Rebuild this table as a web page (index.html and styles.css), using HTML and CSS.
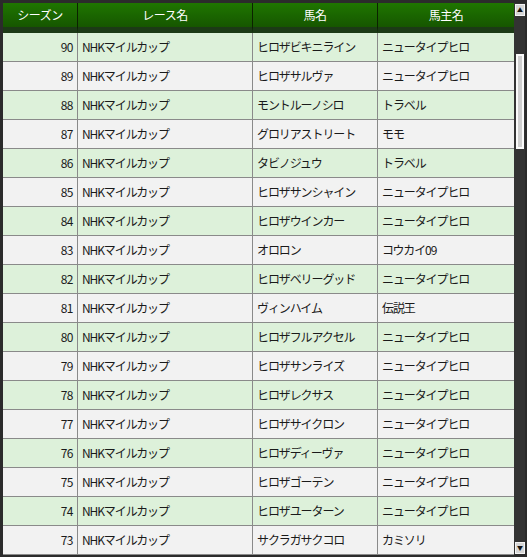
FILE: index.html
```html
<!DOCTYPE html>
<html lang="ja">
<head>
  <meta charset="UTF-8" />
  <title>NHKマイルカップ 歴代優勝馬</title>
  <link rel="stylesheet" href="styles.css">
</head>
<body>
  <div class="frame">
    <table class="winners">
      <colgroup>
        <col class="c-season" />
        <col class="c-race" />
        <col class="c-horse" />
        <col class="c-owner" />
      </colgroup>
      <thead>
        <tr>
          <th>シーズン</th>
          <th>レース名</th>
          <th>馬名</th>
          <th>馬主名</th>
        </tr>
      </thead>
      <tbody>
        <tr><td class="num">90</td><td>NHKマイルカップ</td><td>ヒロザビキニライン</td><td>ニュータイプヒロ</td></tr>
        <tr><td class="num">89</td><td>NHKマイルカップ</td><td>ヒロザサルヴァ</td><td>ニュータイプヒロ</td></tr>
        <tr><td class="num">88</td><td>NHKマイルカップ</td><td>モントルーノシロ</td><td>トラベル</td></tr>
        <tr><td class="num">87</td><td>NHKマイルカップ</td><td>グロリアストリート</td><td>モモ</td></tr>
        <tr><td class="num">86</td><td>NHKマイルカップ</td><td>タビノジュウ</td><td>トラベル</td></tr>
        <tr><td class="num">85</td><td>NHKマイルカップ</td><td>ヒロザサンシャイン</td><td>ニュータイプヒロ</td></tr>
        <tr><td class="num">84</td><td>NHKマイルカップ</td><td>ヒロザウインカー</td><td>ニュータイプヒロ</td></tr>
        <tr><td class="num">83</td><td>NHKマイルカップ</td><td>オロロン</td><td>コウカイ09</td></tr>
        <tr><td class="num">82</td><td>NHKマイルカップ</td><td>ヒロザベリーグッド</td><td>ニュータイプヒロ</td></tr>
        <tr><td class="num">81</td><td>NHKマイルカップ</td><td>ヴィンハイム</td><td>伝説王</td></tr>
        <tr><td class="num">80</td><td>NHKマイルカップ</td><td>ヒロザフルアクセル</td><td>ニュータイプヒロ</td></tr>
        <tr><td class="num">79</td><td>NHKマイルカップ</td><td>ヒロザサンライズ</td><td>ニュータイプヒロ</td></tr>
        <tr><td class="num">78</td><td>NHKマイルカップ</td><td>ヒロザレクサス</td><td>ニュータイプヒロ</td></tr>
        <tr><td class="num">77</td><td>NHKマイルカップ</td><td>ヒロザサイクロン</td><td>ニュータイプヒロ</td></tr>
        <tr><td class="num">76</td><td>NHKマイルカップ</td><td>ヒロザディーヴァ</td><td>ニュータイプヒロ</td></tr>
        <tr><td class="num">75</td><td>NHKマイルカップ</td><td>ヒロザゴーテン</td><td>ニュータイプヒロ</td></tr>
        <tr><td class="num">74</td><td>NHKマイルカップ</td><td>ヒロザユーターン</td><td>ニュータイプヒロ</td></tr>
        <tr><td class="num">73</td><td>NHKマイルカップ</td><td>サクラガサクコロ</td><td>カミソリ</td></tr>
      </tbody>
    </table>

    <div class="scrollbar">
      <div class="scroll-btn">&#9650;</div>
      <div class="scroll-track">
        <div class="scroll-thumb"></div>
      </div>
      <div class="scroll-btn">&#9660;</div>
    </div>
  </div>
</body>
</html>
```

FILE: styles.css
```css
body {
  margin: 0;
  background: #2b2b2b;
  font-family: "Noto Sans CJK JP", "Noto Sans", sans-serif;
  font-size: 12px;
  color: #1a1a1a;
  height: 557px;
  overflow: hidden;
}

.frame {
  display: flex;
  align-items: flex-start;
  padding: 3px 2px 0 3px;
}

.winners {
  width: 511px;
  border-collapse: separate;
  border-spacing: 0;
  table-layout: fixed;
}

.c-season { width: 75px; }
.c-race   { width: 175px; }
.c-horse  { width: 125px; }
.c-owner  { width: 136px; }

.winners th {
  height: 24px;
  padding: 0;
  font-weight: normal;
  color: #fff;
  text-align: center;
  background: linear-gradient(#1f7600, #165600);
  border-bottom: 6px solid #1c3a16;
  border-right: 1px solid #0b2200;
  line-height: 24px;
  letter-spacing: -0.5px;
}

.winners td {
  height: 28px;
  padding: 0 0 0 4px;
  border-bottom: 1px solid #8a8a8a;
  border-right: 1px solid #8a8a8a;
  white-space: nowrap;
  overflow: hidden;
  letter-spacing: -1.1px;
  line-height: 28px;
}

.winners th:last-child,
.winners td:last-child {
  border-right: none;
}

.winners td.num {
  text-align: right;
  padding: 0 4px 0 0;
  letter-spacing: -0.5px;
}

.winners tbody tr:nth-child(odd) td {
  background: #ddf1da;
}

.winners tbody tr:nth-child(even) td {
  background: #f2f2f2;
}

/* スクロールバー */
.scrollbar {
  width: 11px;
  height: 551px;
  display: flex;
  flex-direction: column;
  background: #333;
}

.scroll-btn {
  height: 12px;
  margin: 1px 0 0 1px;
  background: #d6d6d6;
  border: 1px solid #f4f4f4;
  box-sizing: border-box;
  font-size: 6px;
  line-height: 10px;
  text-align: center;
  color: #111;
}

.scroll-track {
  flex: 1;
  padding-top: 38px;
}

.scroll-thumb {
  width: 8px;
  height: 95px;
  margin-left: 2px;
  box-sizing: border-box;
  background: #cfcfcf;
  border: 2px solid #fafafa;
}
```
